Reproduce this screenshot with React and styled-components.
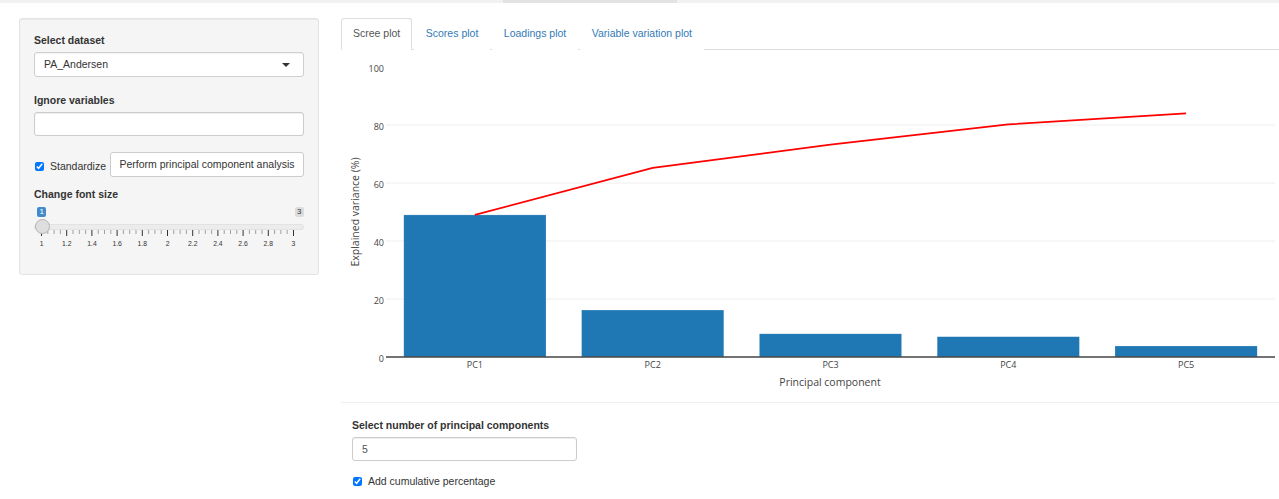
import React from "react";
import styled, { createGlobalStyle } from "styled-components";

const Global = createGlobalStyle`
  html, body { margin: 0; padding: 0; background: #fff; }
  body {
    font-family: "Liberation Sans", Arial, Helvetica, sans-serif;
    font-size: 10.5px;
    line-height: 15px;
    color: #333;
  }
  * { box-sizing: border-box; }
`;

const TopBar = styled.div`
  height: 3px;
  background: #f1f1f1;
  display: flex;
  padding-left: 503px;
`;
const TopThumb = styled.div`
  width: 174px;
  background: #e3e3e3;
`;

const Page = styled.div`
  display: flex;
  align-items: flex-start;
  padding: 15px 0 0 19px;
  gap: 22px;
`;

const Well = styled.div`
  width: 300px;
  height: 257px;
  background: #f5f5f5;
  border: 1px solid #e3e3e3;
  border-radius: 3px;
  box-shadow: inset 0 1px 1px rgba(0, 0, 0, 0.05);
  padding: 14px 14px 0 14px;
  display: flex;
  flex-direction: column;
`;

const Label = styled.label`
  display: block;
  font-weight: bold;
  line-height: 15px;
  margin-top: ${(p) => p.$mt || 0}px;
  margin-bottom: ${(p) => (p.$mb !== undefined ? p.$mb : 4)}px;
`;

const SelectBox = styled.div`
  position: relative;
  height: 25px;
  background: #fff;
  border: 1px solid #cfcfcf;
  border-radius: 3px;
  box-shadow: inset 0 1px 1px rgba(0, 0, 0, 0.05);
  padding: 0 9px;
  display: flex;
  align-items: center;
  justify-content: space-between;
  color: #333;
  &::after {
    content: "";
    width: 0;
    height: 0;
    border-left: 4px solid transparent;
    border-right: 4px solid transparent;
    border-top: 4px solid #333;
    margin-right: 4px;
  }
`;

const TextInput = styled.div`
  height: ${(p) => p.$h || 24}px;
  width: ${(p) => (p.$w ? `${p.$w}px` : "100%")};
  background: #fff;
  border: 1px solid #ccc;
  border-radius: 3px;
  box-shadow: inset 0 1px 1px rgba(0, 0, 0, 0.075);
  padding: 0 9px;
  display: flex;
  align-items: center;
  color: #555;
`;

const InlineRow = styled.div`
  display: flex;
  align-items: center;
  margin-top: 16px;
  height: 25px;
`;

const CheckLabel = styled.label`
  display: flex;
  align-items: center;
  gap: 6px;
  padding-top: ${(p) => p.$pt || 0}px;
  margin-top: ${(p) => p.$mt || 0}px;
  margin-left: 1px;
  margin-right: 4px;
  color: #333;
`;

const Check = styled.input`
  width: 9px;
  height: 9px;
  margin: 0;
  accent-color: #0075ff;
`;

const Button = styled.button`
  height: 25px;
  flex: 1;
  min-width: 0;
  background: #fff;
  border: 1px solid #ccc;
  border-radius: 3px;
  padding: 0 7px 2px;
  font-family: inherit;
  font-size: 10.5px;
  color: #333;
  white-space: nowrap;
`;

/* slider */
const Slider = styled.div`
  margin-top: 5px;
  display: flex;
  flex-direction: column;
`;
const BadgeRow = styled.div`
  display: flex;
  justify-content: space-between;
  padding-left: 3px;
`;
const Badge = styled.span`
  font-size: 8px;
  line-height: 10px;
  padding: 0 2.5px;
  border-radius: 2px;
  background: ${(p) => (p.$active ? "#428bca" : "rgba(0,0,0,0.1)")};
  color: ${(p) => (p.$active ? "#fff" : "#333")};
`;
const Track = styled.div`
  position: relative;
  margin-top: 7px;
  height: 6px;
  background: #ececec;
  border: 1px solid #e2e2e2;
  border-radius: 3px;
`;
const Handle = styled.div`
  position: absolute;
  left: 0;
  top: -6px;
  width: 15px;
  height: 15px;
  border-radius: 50%;
  background: #dedede;
  border: 1px solid #b3b3b3;
`;
const TickSvg = styled.svg`
  display: block;
`;
const TickLabels = styled.div`
  display: grid;
  grid-template-columns: repeat(11, 25.2px);
  margin-left: -5px;
  margin-top: 2px;
`;
const TickLabel = styled.span`
  font-size: 6.8px;
  line-height: 9px;
  text-align: center;
  color: #333;
`;

/* main panel */
const Main = styled.div`
  flex: 1;
  display: flex;
  flex-direction: column;
  min-width: 0;
`;
const Nav = styled.ul`
  list-style: none;
  margin: 0;
  padding: 0;
  display: flex;
  gap: 1.5px;
  border-bottom: 1px solid #ddd;
`;
const Tab = styled.li`
  margin-bottom: -1px;
  padding: 7px 11px 8px;
  border: 1px solid ${(p) => (p.$active ? "#ddd" : "transparent")};
  border-bottom-color: ${(p) => (p.$active ? "#fff" : "transparent")};
  border-radius: 3px 3px 0 0;
  background: #fff;
  color: ${(p) => (p.$active ? "#555" : "#337ab7")};
  line-height: 15px;
  white-space: nowrap;
`;
const ChartSvg = styled.svg`
  display: block;
`;
const Divider = styled.div`
  border-top: 1px solid #eee;
`;
const Controls = styled.div`
  padding: 15px 0 0 11px;
  display: flex;
  flex-direction: column;
`;

const ticksMajor = [1, 1.2, 1.4, 1.6, 1.8, 2, 2.2, 2.4, 2.6, 2.8, 3];

function Ticks() {
  const lines = [];
  for (let i = 0; i <= 40; i++) {
    const x = 7.5 + i * 6.3;
    const major = i % 4 === 0;
    lines.push(
      <line
        key={i}
        x1={x}
        x2={x}
        y1={0}
        y2={major ? 6 : 4}
        stroke={major ? "#333" : "#666"}
        strokeWidth={major ? 1 : 0.6}
      />
    );
  }
  return (
    <TickSvg width="269" height="7" viewBox="0 0 269 7">
      {lines}
    </TickSvg>
  );
}

const bars = [
  { name: "PC1", v: 49, cum: 49 },
  { name: "PC2", v: 16.2, cum: 65.2 },
  { name: "PC3", v: 8, cum: 73.2 },
  { name: "PC4", v: 7, cum: 80.2 },
  { name: "PC5", v: 3.8, cum: 84 },
];

function Chart() {
  const x0 = 45;
  const x1 = 934;
  const y0 = 307;
  const k = 2.9;
  const slot = (x1 - x0) / 5;
  const bw = slot * 0.8;
  const y = (v) => y0 - v * k;
  const cx = (i) => x0 + slot * (i + 0.5);
  const line = bars.map((b, i) => `${cx(i)},${y(b.cum)}`).join(" ");
  return (
    <ChartSvg width="938" height="352" viewBox="0 0 938 352">
      {[20, 40, 60, 80].map((v) => (
        <line key={v} x1={x0} x2={x1} y1={y(v)} y2={y(v)} stroke="#eee" strokeWidth="1" />
      ))}
      {[0, 20, 40, 60, 80, 100].map((v) => (
        <text
          key={v}
          x={43}
          y={y(v) + 4.5}
          textAnchor="end"
          fontFamily="'Open Sans', sans-serif"
          fontSize="9"
          fill="#444"
        >
          {v}
        </text>
      ))}
      {bars.map((b, i) => (
        <rect
          key={b.name}
          x={cx(i) - bw / 2}
          y={y(b.v)}
          width={bw}
          height={b.v * k}
          fill="#1f77b4"
          stroke="rgba(255,255,255,0.35)"
          strokeWidth="0.6"
        />
      ))}
      <line x1={x0} x2={x1} y1={y0} y2={y0} stroke="#444" strokeWidth="1.6" />
      <polyline points={line} fill="none" stroke="#ff0000" strokeWidth="1.8" />
      {bars.map((b, i) => (
        <text
          key={b.name}
          x={cx(i)}
          y={317.5}
          textAnchor="middle"
          fontFamily="'Open Sans', sans-serif"
          fontSize="9"
          fill="#444"
        >
          {b.name}
        </text>
      ))}
      <text
        x={489}
        y={336}
        textAnchor="middle"
        fontFamily="'Open Sans', sans-serif"
        fontSize="10.5"
        fill="#444"
      >
        Principal component
      </text>
      <text
        transform="translate(18 162) rotate(-90)"
        textAnchor="middle"
        fontFamily="'Open Sans', sans-serif"
        fontSize="10.5"
        fill="#444"
      >
        Explained variance (%)
      </text>
    </ChartSvg>
  );
}

export default function App() {
  return (
    <>
      <Global />
      <TopBar>
        <TopThumb />
      </TopBar>
      <Page>
        <Well>
          <Label>Select dataset</Label>
          <SelectBox>PA_Andersen</SelectBox>
          <Label $mt={16}>Ignore variables</Label>
          <TextInput />
          <InlineRow>
            <CheckLabel $pt={4}>
              <Check type="checkbox" defaultChecked />
              Standardize
            </CheckLabel>
            <Button>Perform principal component analysis</Button>
          </InlineRow>
          <Label $mt={10} $mb={0}>Change font size</Label>
          <Slider>
            <BadgeRow>
              <Badge $active>1</Badge>
              <Badge>3</Badge>
            </BadgeRow>
            <Track>
              <Handle />
            </Track>
            <Ticks />
            <TickLabels>
              {ticksMajor.map((t) => (
                <TickLabel key={t}>{t}</TickLabel>
              ))}
            </TickLabels>
          </Slider>
        </Well>
        <Main>
          <Nav>
            <Tab $active>Scree plot</Tab>
            <Tab>Scores plot</Tab>
            <Tab>Loadings plot</Tab>
            <Tab>Variable variation plot</Tab>
          </Nav>
          <Chart />
          <Divider />
          <Controls>
            <Label>Select number of principal components</Label>
            <TextInput $w={225}>5</TextInput>
            <CheckLabel $mt={13}>
              <Check type="checkbox" defaultChecked />
              Add cumulative percentage
            </CheckLabel>
          </Controls>
        </Main>
      </Page>
    </>
  );
}
